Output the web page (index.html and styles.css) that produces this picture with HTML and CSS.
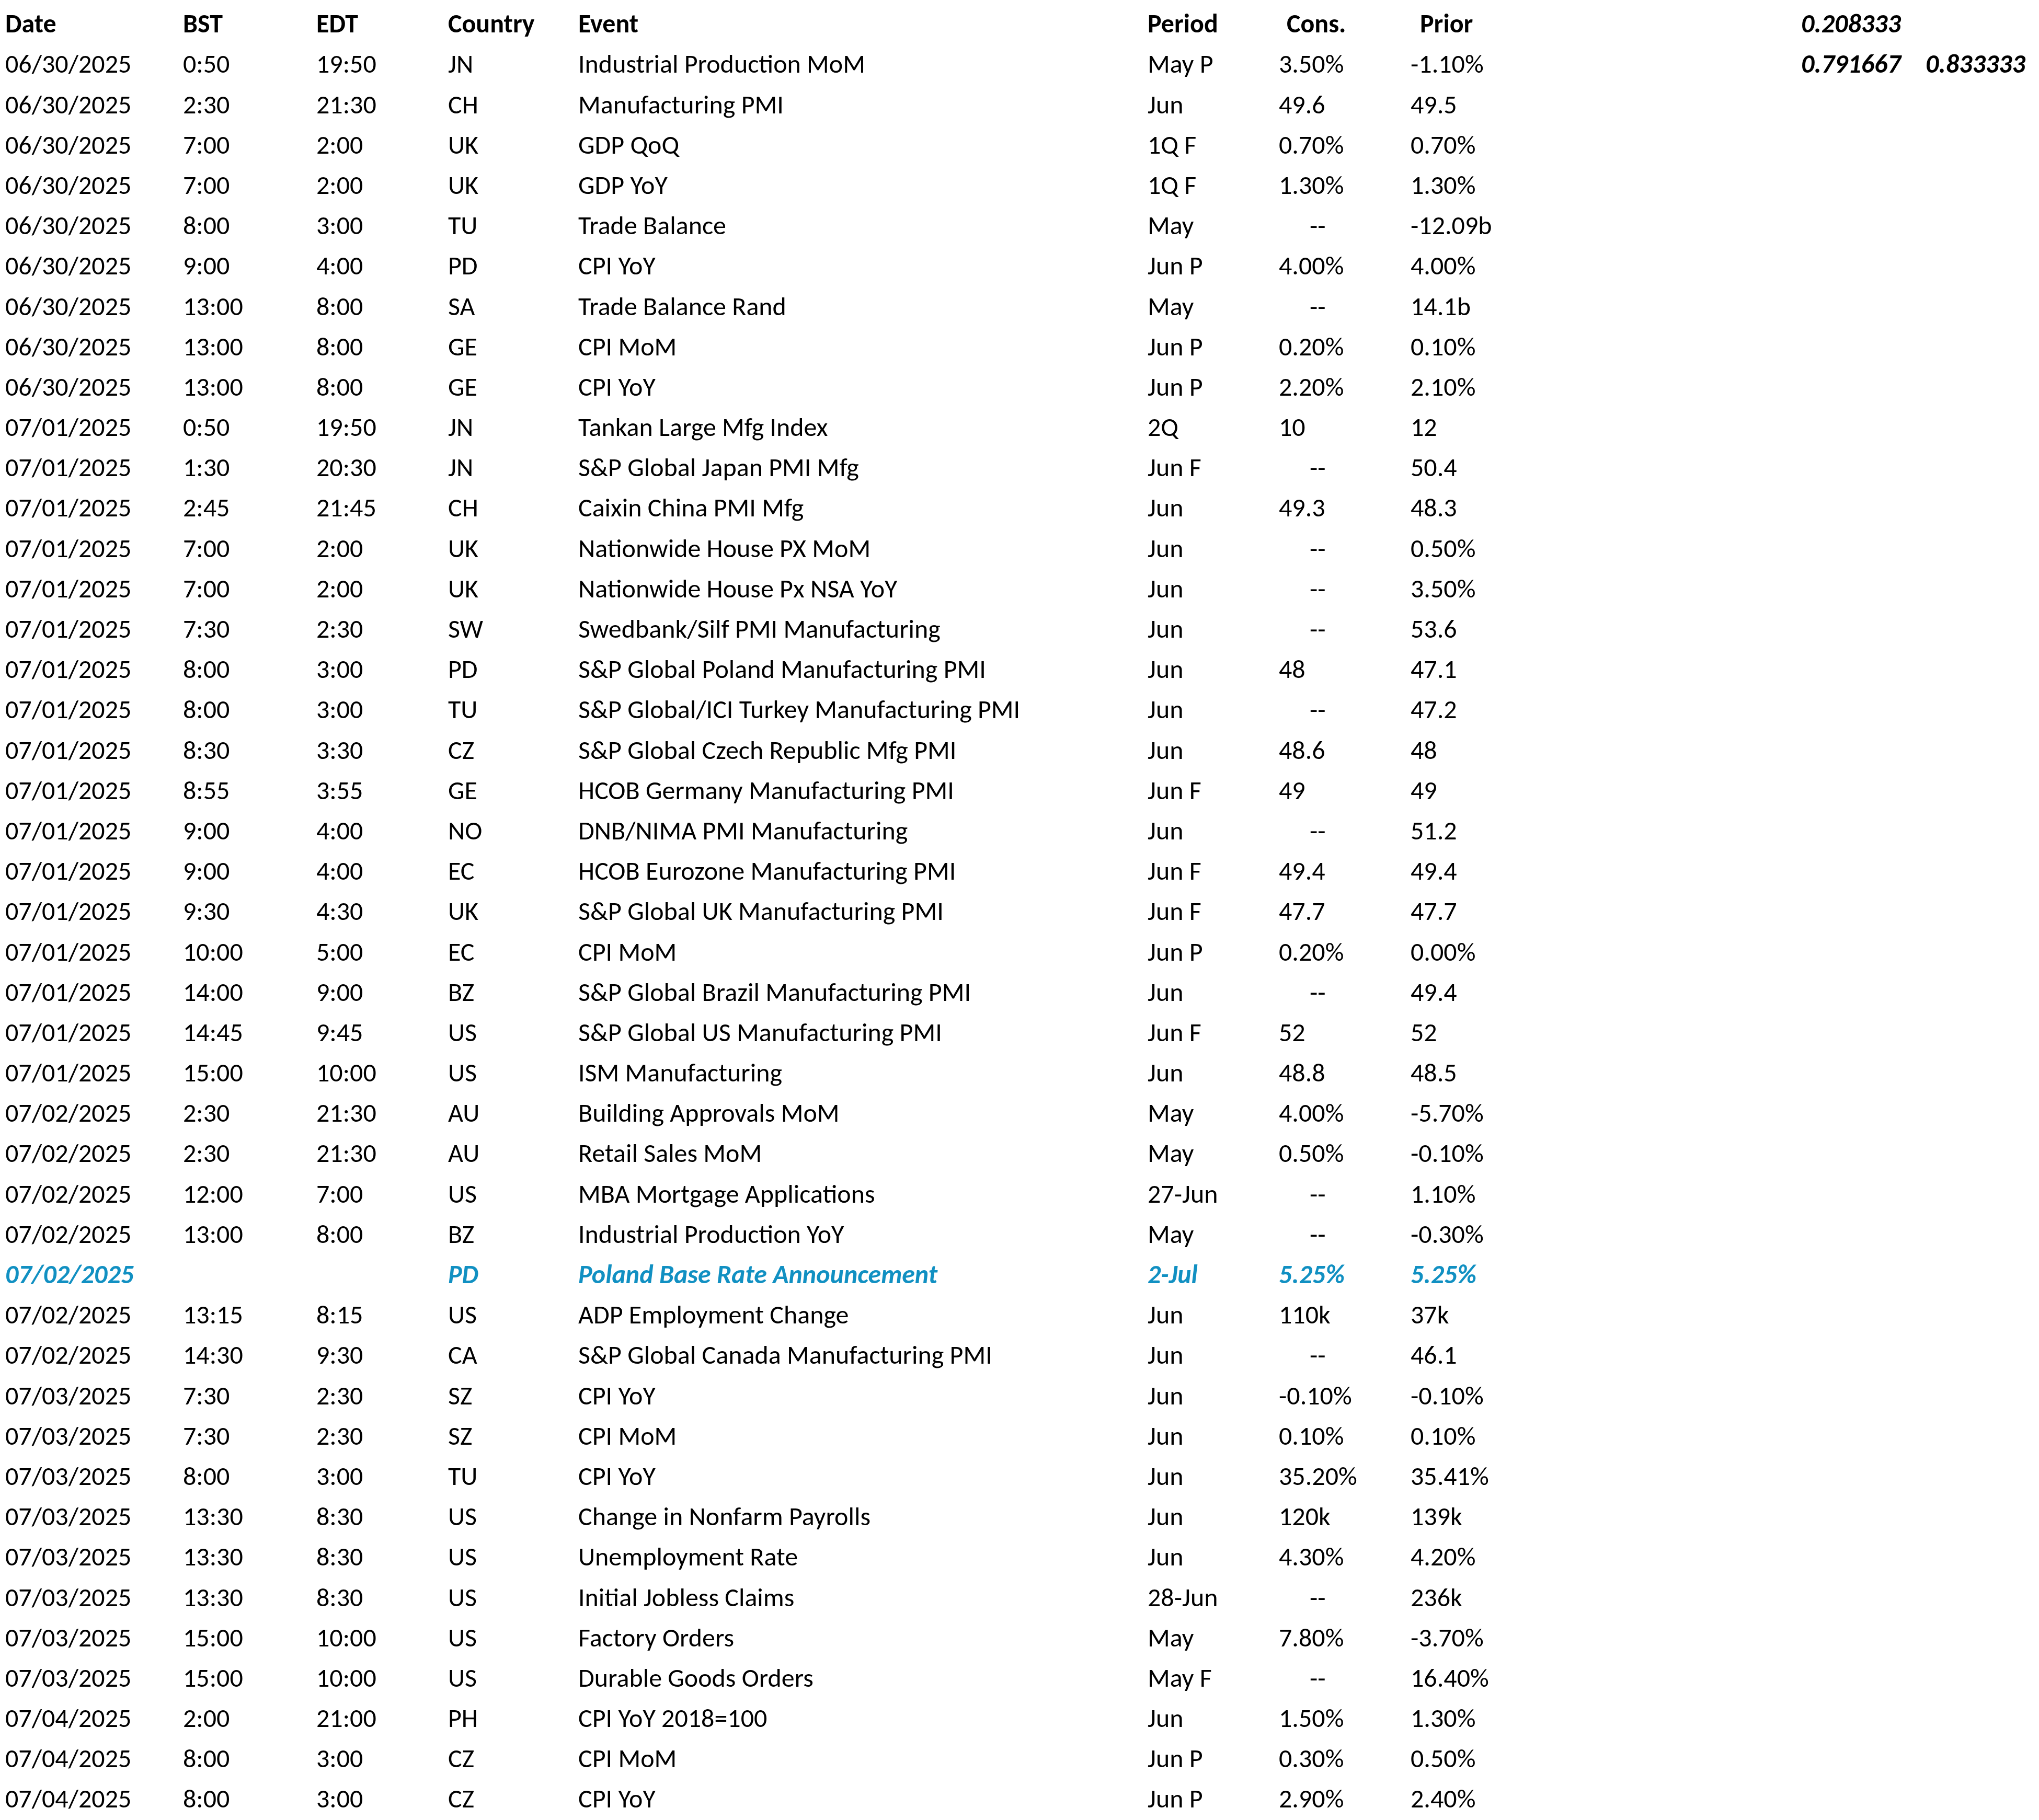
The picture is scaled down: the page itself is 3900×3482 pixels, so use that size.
FILE: index.html
```html
<!DOCTYPE html>
<html lang="en">
<head>
<meta charset="utf-8">
<title>Economic Calendar</title>
<link rel="stylesheet" href="styles.css">
</head>
<body>
<div class="sheet">
  <div class="row head">
    <span>Date</span><span>BST</span><span>EDT</span><span>Country</span><span>Event</span><span>Period</span><span class="hc">Cons.</span><span class="hp">Prior</span><span class="x">0.208333</span><span></span>
  </div>
  <div class="row"><span>06/30/2025</span><span>0:50</span><span>19:50</span><span>JN</span><span>Industrial Production MoM</span><span>May P</span><span>3.50%</span><span>-1.10%</span><span class="x">0.791667</span><span class="x">0.833333</span></div>
  <div class="row"><span>06/30/2025</span><span>2:30</span><span>21:30</span><span>CH</span><span>Manufacturing PMI</span><span>Jun</span><span>49.6</span><span>49.5</span></div>
  <div class="row"><span>06/30/2025</span><span>7:00</span><span>2:00</span><span>UK</span><span>GDP QoQ</span><span>1Q F</span><span>0.70%</span><span>0.70%</span></div>
  <div class="row"><span>06/30/2025</span><span>7:00</span><span>2:00</span><span>UK</span><span>GDP YoY</span><span>1Q F</span><span>1.30%</span><span>1.30%</span></div>
  <div class="row"><span>06/30/2025</span><span>8:00</span><span>3:00</span><span>TU</span><span>Trade Balance</span><span>May</span><span class="na">--</span><span>-12.09b</span></div>
  <div class="row"><span>06/30/2025</span><span>9:00</span><span>4:00</span><span>PD</span><span>CPI YoY</span><span>Jun P</span><span>4.00%</span><span>4.00%</span></div>
  <div class="row"><span>06/30/2025</span><span>13:00</span><span>8:00</span><span>SA</span><span>Trade Balance Rand</span><span>May</span><span class="na">--</span><span>14.1b</span></div>
  <div class="row"><span>06/30/2025</span><span>13:00</span><span>8:00</span><span>GE</span><span>CPI MoM</span><span>Jun P</span><span>0.20%</span><span>0.10%</span></div>
  <div class="row"><span>06/30/2025</span><span>13:00</span><span>8:00</span><span>GE</span><span>CPI YoY</span><span>Jun P</span><span>2.20%</span><span>2.10%</span></div>
  <div class="row"><span>07/01/2025</span><span>0:50</span><span>19:50</span><span>JN</span><span>Tankan Large Mfg Index</span><span>2Q</span><span>10</span><span>12</span></div>
  <div class="row"><span>07/01/2025</span><span>1:30</span><span>20:30</span><span>JN</span><span>S&amp;P Global Japan PMI Mfg</span><span>Jun F</span><span class="na">--</span><span>50.4</span></div>
  <div class="row"><span>07/01/2025</span><span>2:45</span><span>21:45</span><span>CH</span><span>Caixin China PMI Mfg</span><span>Jun</span><span>49.3</span><span>48.3</span></div>
  <div class="row"><span>07/01/2025</span><span>7:00</span><span>2:00</span><span>UK</span><span>Nationwide House PX MoM</span><span>Jun</span><span class="na">--</span><span>0.50%</span></div>
  <div class="row"><span>07/01/2025</span><span>7:00</span><span>2:00</span><span>UK</span><span>Nationwide House Px NSA YoY</span><span>Jun</span><span class="na">--</span><span>3.50%</span></div>
  <div class="row"><span>07/01/2025</span><span>7:30</span><span>2:30</span><span>SW</span><span>Swedbank/Silf PMI Manufacturing</span><span>Jun</span><span class="na">--</span><span>53.6</span></div>
  <div class="row"><span>07/01/2025</span><span>8:00</span><span>3:00</span><span>PD</span><span>S&amp;P Global Poland Manufacturing PMI</span><span>Jun</span><span>48</span><span>47.1</span></div>
  <div class="row"><span>07/01/2025</span><span>8:00</span><span>3:00</span><span>TU</span><span>S&amp;P Global/ICI Turkey Manufacturing PMI</span><span>Jun</span><span class="na">--</span><span>47.2</span></div>
  <div class="row"><span>07/01/2025</span><span>8:30</span><span>3:30</span><span>CZ</span><span>S&amp;P Global Czech Republic Mfg PMI</span><span>Jun</span><span>48.6</span><span>48</span></div>
  <div class="row"><span>07/01/2025</span><span>8:55</span><span>3:55</span><span>GE</span><span>HCOB Germany Manufacturing PMI</span><span>Jun F</span><span>49</span><span>49</span></div>
  <div class="row"><span>07/01/2025</span><span>9:00</span><span>4:00</span><span>NO</span><span>DNB/NIMA PMI Manufacturing</span><span>Jun</span><span class="na">--</span><span>51.2</span></div>
  <div class="row"><span>07/01/2025</span><span>9:00</span><span>4:00</span><span>EC</span><span>HCOB Eurozone Manufacturing PMI</span><span>Jun F</span><span>49.4</span><span>49.4</span></div>
  <div class="row"><span>07/01/2025</span><span>9:30</span><span>4:30</span><span>UK</span><span>S&amp;P Global UK Manufacturing PMI</span><span>Jun F</span><span>47.7</span><span>47.7</span></div>
  <div class="row"><span>07/01/2025</span><span>10:00</span><span>5:00</span><span>EC</span><span>CPI MoM</span><span>Jun P</span><span>0.20%</span><span>0.00%</span></div>
  <div class="row"><span>07/01/2025</span><span>14:00</span><span>9:00</span><span>BZ</span><span>S&amp;P Global Brazil Manufacturing PMI</span><span>Jun</span><span class="na">--</span><span>49.4</span></div>
  <div class="row"><span>07/01/2025</span><span>14:45</span><span>9:45</span><span>US</span><span>S&amp;P Global US Manufacturing PMI</span><span>Jun F</span><span>52</span><span>52</span></div>
  <div class="row"><span>07/01/2025</span><span>15:00</span><span>10:00</span><span>US</span><span>ISM Manufacturing</span><span>Jun</span><span>48.8</span><span>48.5</span></div>
  <div class="row"><span>07/02/2025</span><span>2:30</span><span>21:30</span><span>AU</span><span>Building Approvals MoM</span><span>May</span><span>4.00%</span><span>-5.70%</span></div>
  <div class="row"><span>07/02/2025</span><span>2:30</span><span>21:30</span><span>AU</span><span>Retail Sales MoM</span><span>May</span><span>0.50%</span><span>-0.10%</span></div>
  <div class="row"><span>07/02/2025</span><span>12:00</span><span>7:00</span><span>US</span><span>MBA Mortgage Applications</span><span>27-Jun</span><span class="na">--</span><span>1.10%</span></div>
  <div class="row"><span>07/02/2025</span><span>13:00</span><span>8:00</span><span>BZ</span><span>Industrial Production YoY</span><span>May</span><span class="na">--</span><span>-0.30%</span></div>
  <div class="row hl"><span>07/02/2025</span><span></span><span></span><span>PD</span><span>Poland Base Rate Announcement</span><span>2-Jul</span><span>5.25%</span><span>5.25%</span></div>
  <div class="row"><span>07/02/2025</span><span>13:15</span><span>8:15</span><span>US</span><span>ADP Employment Change</span><span>Jun</span><span>110k</span><span>37k</span></div>
  <div class="row"><span>07/02/2025</span><span>14:30</span><span>9:30</span><span>CA</span><span>S&amp;P Global Canada Manufacturing PMI</span><span>Jun</span><span class="na">--</span><span>46.1</span></div>
  <div class="row"><span>07/03/2025</span><span>7:30</span><span>2:30</span><span>SZ</span><span>CPI YoY</span><span>Jun</span><span>-0.10%</span><span>-0.10%</span></div>
  <div class="row"><span>07/03/2025</span><span>7:30</span><span>2:30</span><span>SZ</span><span>CPI MoM</span><span>Jun</span><span>0.10%</span><span>0.10%</span></div>
  <div class="row"><span>07/03/2025</span><span>8:00</span><span>3:00</span><span>TU</span><span>CPI YoY</span><span>Jun</span><span>35.20%</span><span>35.41%</span></div>
  <div class="row"><span>07/03/2025</span><span>13:30</span><span>8:30</span><span>US</span><span>Change in Nonfarm Payrolls</span><span>Jun</span><span>120k</span><span>139k</span></div>
  <div class="row"><span>07/03/2025</span><span>13:30</span><span>8:30</span><span>US</span><span>Unemployment Rate</span><span>Jun</span><span>4.30%</span><span>4.20%</span></div>
  <div class="row"><span>07/03/2025</span><span>13:30</span><span>8:30</span><span>US</span><span>Initial Jobless Claims</span><span>28-Jun</span><span class="na">--</span><span>236k</span></div>
  <div class="row"><span>07/03/2025</span><span>15:00</span><span>10:00</span><span>US</span><span>Factory Orders</span><span>May</span><span>7.80%</span><span>-3.70%</span></div>
  <div class="row"><span>07/03/2025</span><span>15:00</span><span>10:00</span><span>US</span><span>Durable Goods Orders</span><span>May F</span><span class="na">--</span><span>16.40%</span></div>
  <div class="row"><span>07/04/2025</span><span>2:00</span><span>21:00</span><span>PH</span><span>CPI YoY 2018=100</span><span>Jun</span><span>1.50%</span><span>1.30%</span></div>
  <div class="row"><span>07/04/2025</span><span>8:00</span><span>3:00</span><span>CZ</span><span>CPI MoM</span><span>Jun P</span><span>0.30%</span><span>0.50%</span></div>
  <div class="row"><span>07/04/2025</span><span>8:00</span><span>3:00</span><span>CZ</span><span>CPI YoY</span><span>Jun P</span><span>2.90%</span><span>2.40%</span></div>
</div>
</body>
</html>
```
FILE: styles.css
```css
html, body {
  margin: 0;
  padding: 0;
  background: #ffffff;
}

body {
  color: #000000;
  font-family: Carlito, Calibri, "Open Sans", sans-serif;
  font-size: 50px;
}

.sheet {
  padding-left: 10px;
}

.row {
  display: grid;
  grid-template-columns: 340px 255px 252px 249px 1089px 251px 252px 747px 238px 200px;
  height: 77.2px;
  align-items: end;
}

.row span {
  white-space: nowrap;
  line-height: 50px;
  padding-bottom: 7px;
}

.head span {
  font-weight: bold;
}

.head .hc {
  padding-left: 15px;
}

.head .hp {
  padding-left: 18px;
}

.row .x {
  font-weight: bold;
  font-style: italic;
}

.na {
  padding-left: 59px;
}

.hl span {
  color: #1190c2;
  font-weight: bold;
  font-style: italic;
}
```
